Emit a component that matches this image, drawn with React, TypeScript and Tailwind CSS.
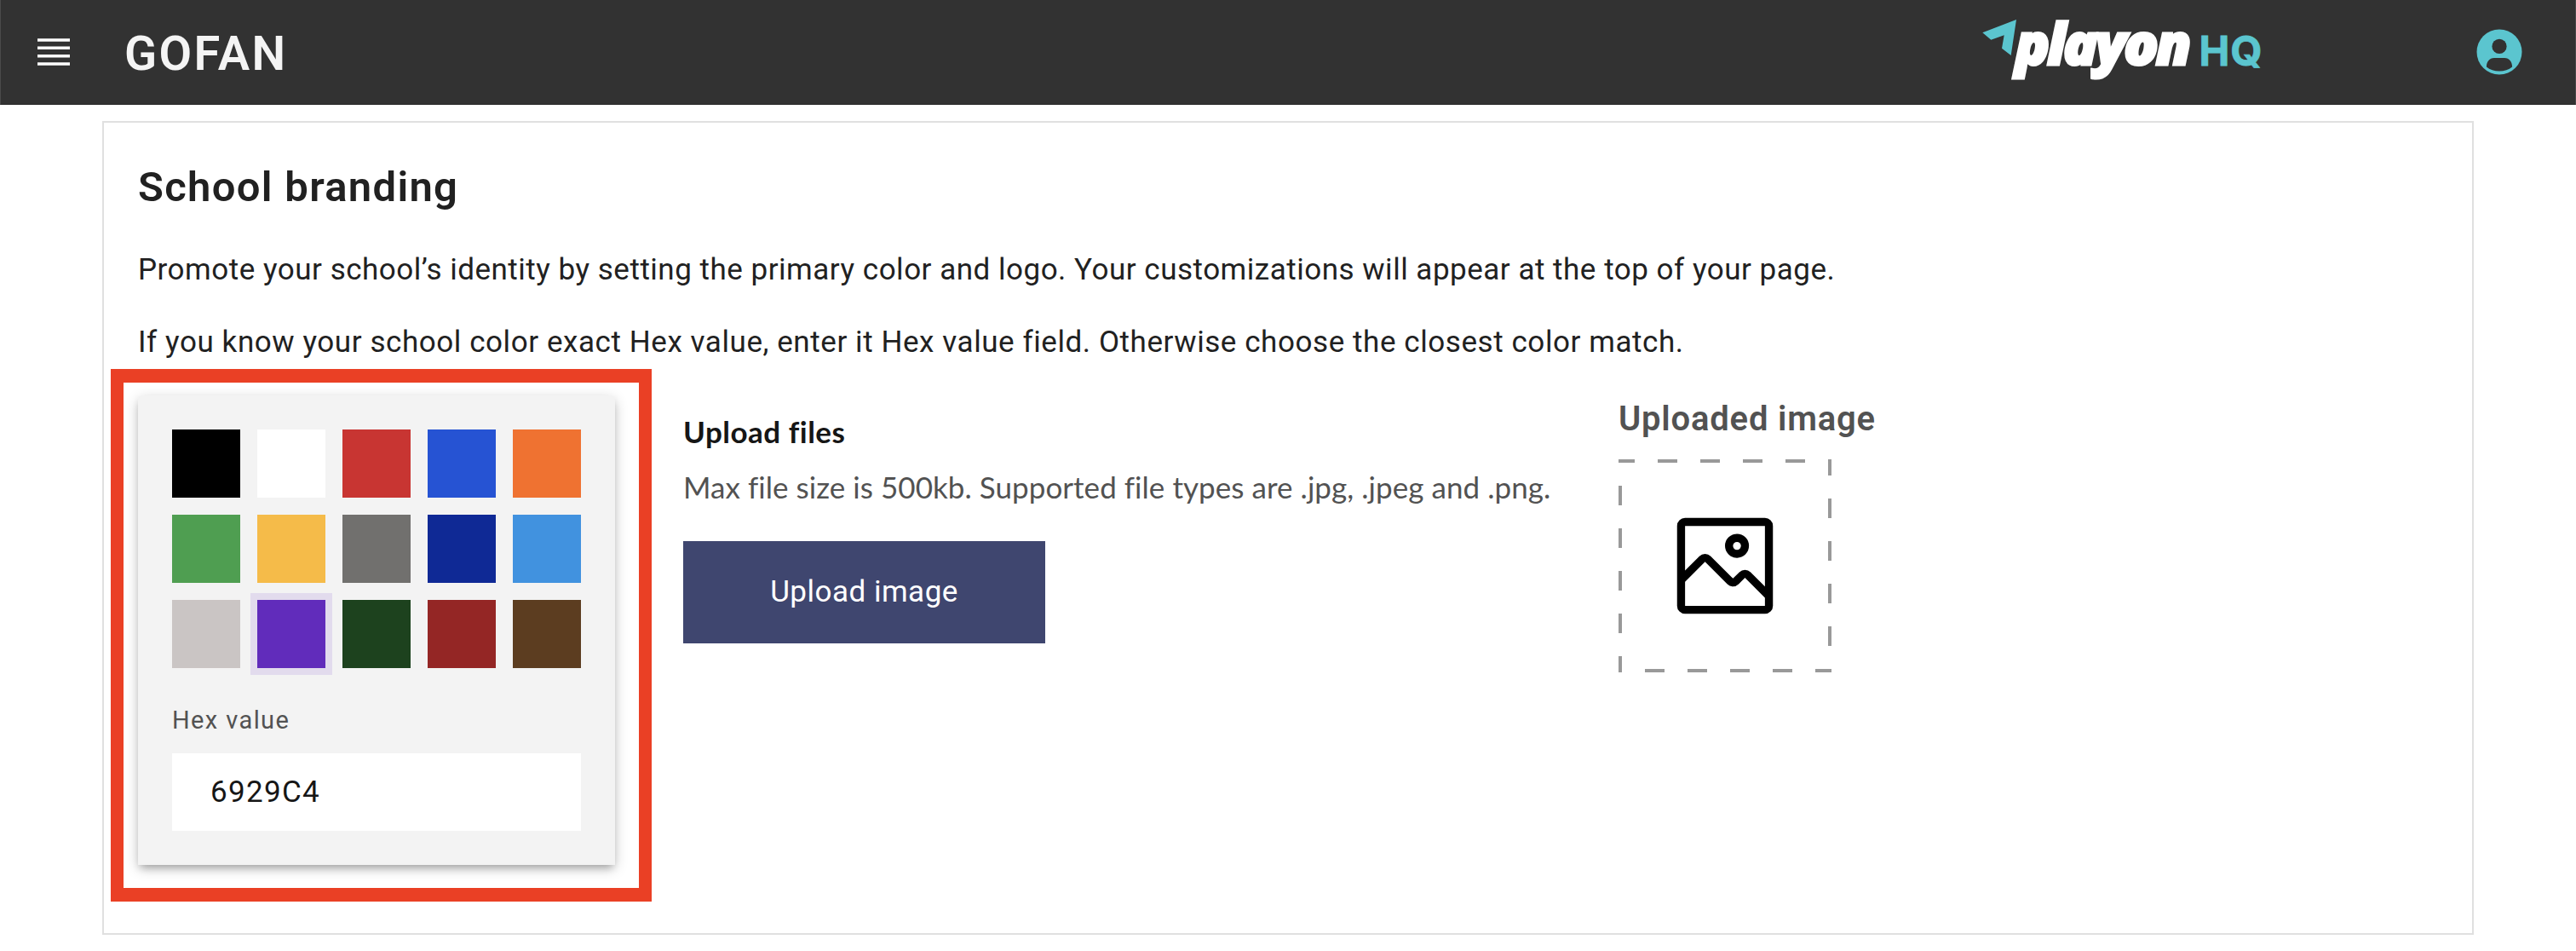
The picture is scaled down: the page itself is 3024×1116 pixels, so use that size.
const swatches = [
  { name: "Black", cls: "bg-black" },
  { name: "White", cls: "bg-white" },
  { name: "Red", cls: "bg-[#c83532]" },
  { name: "Blue", cls: "bg-[#2653d3]" },
  { name: "Orange", cls: "bg-[#ef7231]" },
  { name: "Green", cls: "bg-[#4f9e51]" },
  { name: "Yellow", cls: "bg-[#f5bb49]" },
  { name: "Gray", cls: "bg-[#71706e]" },
  { name: "Navy", cls: "bg-[#0f2995]" },
  { name: "Light blue", cls: "bg-[#4192df]" },
  { name: "Silver", cls: "bg-[#cac5c4]" },
  { name: "Purple", cls: "bg-[#612cbb] outline-8 outline-[#e2dbed]" },
  { name: "Dark green", cls: "bg-[#1d421e]" },
  { name: "Maroon", cls: "bg-[#942625]" },
  { name: "Brown", cls: "bg-[#5c3d20]" },
];

function MenuIcon() {
  return (
    <svg className="block h-8 w-[38px]" viewBox="0 0 38 32" fill="#fff">
      <path d="M0 .2h38v3.5H0zM0 9.6h38v3.5H0zM0 19h38v3.5H0zM0 28.3h38v3.5H0z" />
    </svg>
  );
}

function PlayonLogo() {
  return (
    <svg className="block h-[118px] w-[350px] overflow-visible" viewBox="0 -14 350 118">
      <path d="M7.3 24.3 47 9l-6.300 42L30 42.700l2.700-15.400-15.400 5.400z" fill="#5bc5cf" />
      <text
        x="45.500"
        y="62.200"
        textLength="207"
        lengthAdjust="spacing"
        fill="#fff"
        stroke="#fff"
        strokeWidth="3"
        className="font-['Open_Sans',sans-serif] text-[67px] font-extrabold italic"
      >
        playon
      </text>
      <text
        x="261.500"
        y="62.500"
        textLength="74"
        fill="#5bc5cf"
        stroke="#5bc5cf"
        strokeWidth="0.8"
        className="font-['Inter',sans-serif] text-[48px] font-bold"
      >
        HQ
      </text>
    </svg>
  );
}

function AvatarIcon() {
  return (
    <svg className="block size-[54px]" viewBox="0 0 54 54">
      <circle cx="27" cy="27" r="26.500" fill="#5bc5cf" />
      <circle cx="27" cy="20.400" r="8.600" fill="#323232" />
      <path d="M11.900 44.400c0-6 3.600-10.300 9-10.300h12.200c5.400 0 9 4.300 9 10.300-4 3.300-9.300 5-15.100 5s-11.100-1.700-15.100-5z" fill="#323232" />
    </svg>
  );
}

function ImageIcon() {
  return (
    <svg className="size-[150px]" viewBox="0 0 32 32">
      <path d="M19 14a3 3 0 1 0-3-3 3 3 0 0 0 3 3Zm0-4a1 1 0 1 1-1 1 1 1 0 0 1 1-1Z" />
      <path d="M26 4H6a2 2 0 0 0-2 2v20a2 2 0 0 0 2 2h20a2 2 0 0 0 2-2V6a2 2 0 0 0-2-2Zm0 22H6v-6l5-5 5.590 5.590a2 2 0 0 0 2.820 0L21 19l5 5Zm0-4.830-3.590-3.590a2 2 0 0 0-2.820 0L18 19.170l-5.590-5.590a2 2 0 0 0-2.820 0L6 17.170V6h20Z" />
    </svg>
  );
}

function Header() {
  return (
    <header className="flex h-[123px] items-center border-x border-b border-x-[#4a4a4a] border-b-[#262626] bg-[#323232] pr-[62px] pl-[43px]">
      <MenuIcon />
      <span className="ml-16 pt-[3px] text-[56px] leading-none font-semibold tracking-[2.4px] text-[#f4f4f4]">GOFAN</span>
      <div className="ml-auto flex items-center">
        <div className="mr-[237px] pb-1">
          <PlayonLogo />
        </div>
        <AvatarIcon />
      </div>
    </header>
  );
}

function ColorPicker() {
  return (
    <div className="relative h-[551px] w-[560px] rounded-t-md bg-[#f3f3f3] p-10 shadow-[0_4px_16px_rgba(0,0,0,0.2),0_6px_10px_-3px_rgba(0,0,0,0.25)]">
      <div className="grid grid-cols-5 gap-5">
        {swatches.map((s) => (
          <button key={s.name} aria-label={s.name} className={`size-20 ${s.cls}`} />
        ))}
      </div>
      <div className="mt-[41px] text-[29px] leading-[40px] tracking-[1.4px] text-[#525252]">Hex value</div>
      <div className="mt-[19px] flex h-[91px] items-center bg-white pt-px pl-[45px] text-[35px] tracking-[1.3px] text-[#161616]">
        6929C4
      </div>
      <div className="pointer-events-none absolute -top-[31px] -left-8 h-[625px] w-[635px] border-x-[15px] border-y-[16px] border-[#ea4025]" />
    </div>
  );
}

function UploadSection() {
  return (
    <div className="w-[1098px] pt-[17px] font-['Lato',sans-serif] text-[35px]">
      <div className="leading-[50px] font-bold tracking-[0.5px] text-[#161616]">Upload files</div>
      <div className="mt-[15px] leading-[50px] tracking-[0.05px] whitespace-nowrap text-[#525252] [font-variant-ligatures:none]">
        Max file size is 500kb. Supported file types are .jpg, .jpeg and .png.
      </div>
      <button className="mt-[39px] flex h-[120px] w-[425px] items-center justify-center bg-[#3f466f] font-['Roboto',sans-serif] text-[35px] tracking-[0.5px] text-white">
        Upload image
      </button>
    </div>
  );
}

function UploadedImage() {
  return (
    <div className="pt-[3px]">
      <div className="text-[40px] leading-[50px] font-semibold tracking-[0.8px] text-[#525252]">Uploaded image</div>
      <div className="relative mt-[22px] flex size-[250px] items-center justify-center">
        <svg className="absolute inset-0 size-full" viewBox="0 0 250 250">
          <rect width="250" height="250" fill="none" stroke="#999" strokeWidth="8" strokeDasharray="23 27" strokeDashoffset="4" />
        </svg>
        <ImageIcon />
      </div>
    </div>
  );
}

export default function App() {
  return (
    <div className="h-[1116px] w-[3024px] overflow-hidden bg-white font-['Roboto',sans-serif]">
      <Header />
      <main className="mt-[19px] ml-[120px] h-[955px] w-[2784px] border-2 border-[#e0e0e0] pt-[46px] pl-10">
        <h1 className="text-[49px] leading-[60px] font-semibold tracking-[1.3px] text-[#212121]">School branding</h1>
        <p className="mt-[42px] text-[35px] leading-[50px] tracking-[0.51px] text-[#212121]">
          Promote your school’s identity by setting the primary color and logo. Your customizations will appear at the top of your page.
        </p>
        <p className="mt-[35px] text-[35px] leading-[50px] tracking-[0.57px] text-[#212121]">
          If you know your school color exact Hex value, enter it Hex value field. Otherwise choose the closest color match.
        </p>
        <div className="mt-[37px] flex items-start">
          <ColorPicker />
          <div className="w-20" />
          <UploadSection />
          <UploadedImage />
        </div>
      </main>
    </div>
  );
}
